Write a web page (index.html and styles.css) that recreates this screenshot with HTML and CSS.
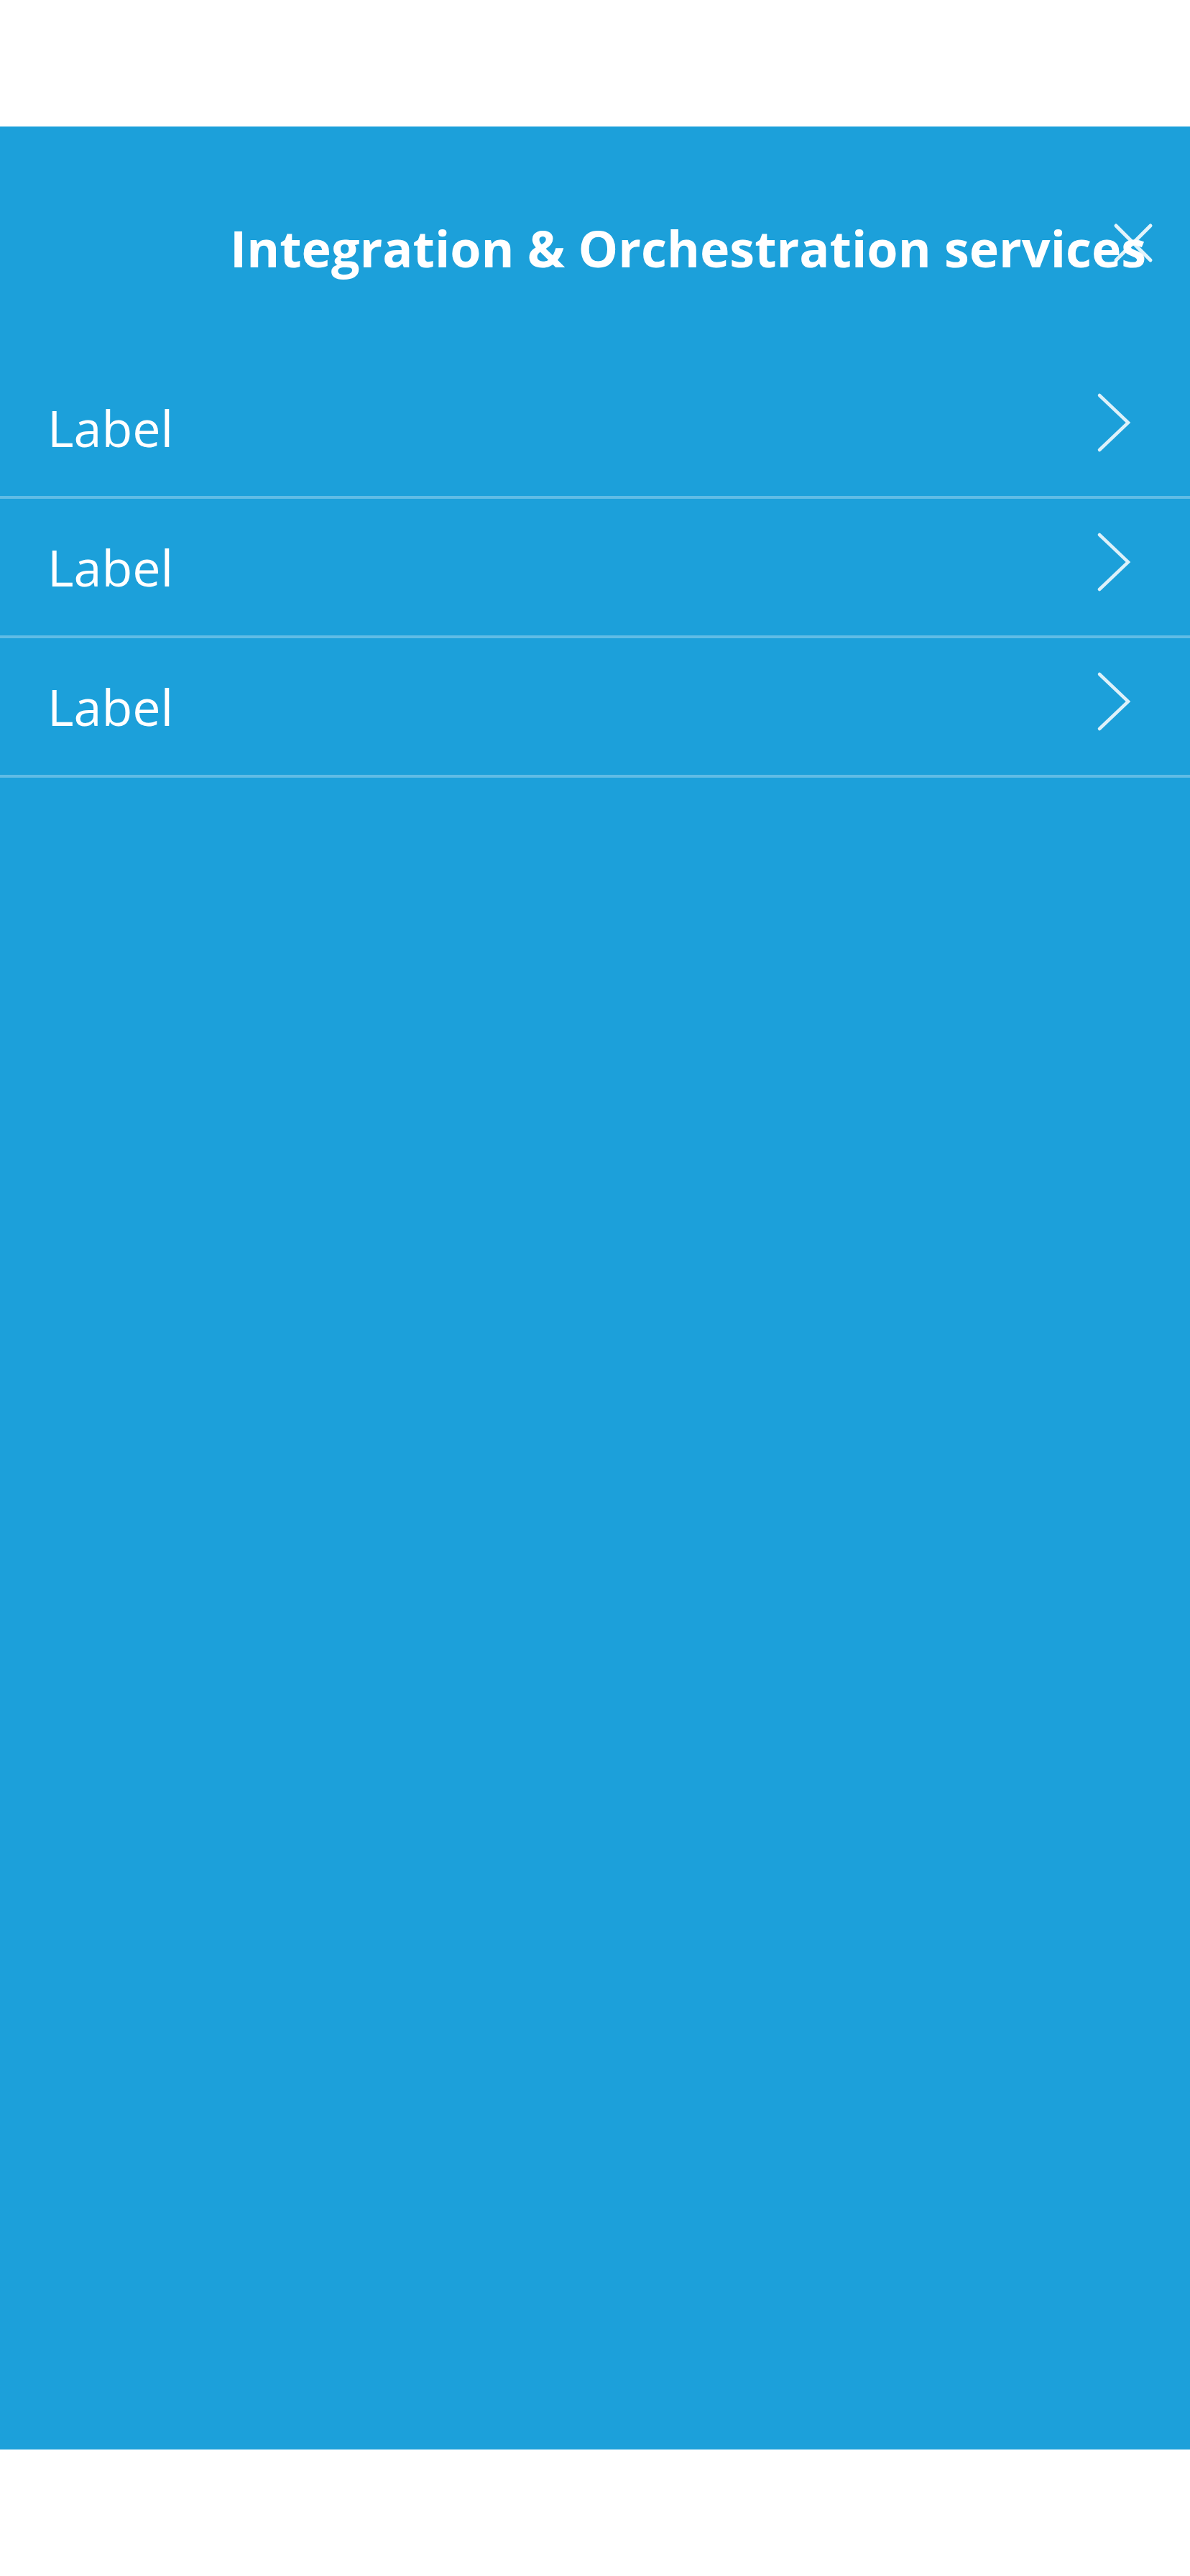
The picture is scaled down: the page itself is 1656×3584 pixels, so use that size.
FILE: index.html
```html
<!DOCTYPE html>
<html lang="en">
<head>
<meta charset="utf-8">
<title>Integration &amp; Orchestration services</title>
<link rel="stylesheet" href="styles.css">
</head>
<body>
<div class="page">
  <section class="panel">
    <header class="panel-header">
      <h1 class="panel-title">Integration &amp; Orchestration services</h1>
      <button class="close-btn" aria-label="Close">
        <svg width="56" height="56" viewBox="0 0 56 56"><path d="M4 4 L52 52 M52 4 L4 52" /></svg>
      </button>
    </header>
    <ul class="menu">
      <li class="menu-item"><span class="menu-label">Label</span><svg class="chevron" width="48" height="84" viewBox="0 0 48 84"><path d="M4 4 L44 42 L4 80" /></svg></li>
      <li class="menu-item"><span class="menu-label">Label</span><svg class="chevron" width="48" height="84" viewBox="0 0 48 84"><path d="M4 4 L44 42 L4 80" /></svg></li>
      <li class="menu-item"><span class="menu-label">Label</span><svg class="chevron" width="48" height="84" viewBox="0 0 48 84"><path d="M4 4 L44 42 L4 80" /></svg></li>
    </ul>
  </section>
</div>
</body>
</html>
```
FILE: styles.css
```css
html, body {
  margin: 0;
  padding: 0;
  background: #ffffff;
}
body {
  font-family: "Open Sans", "Noto Sans", sans-serif;
  color: #ffffff;
}
.page {
  padding-top: 176px;
  height: 3584px;
  box-sizing: border-box;
}
.panel {
  position: relative;
  background: #1ca0da;
  height: 3232px;
}
.panel-header {
  height: 324px;
  box-sizing: border-box;
  padding: 121px 0 0 0;
}
.panel-title {
  margin: 0;
  padding-left: 320px;
  font-size: 70px;
  font-weight: 700;
  line-height: normal;
  white-space: nowrap;
}
.close-btn {
  position: absolute;
  top: 134px;
  right: 51px;
  width: 56px;
  height: 56px;
  padding: 0;
  border: 0;
  background: transparent;
  display: block;
}
.close-btn svg {
  display: block;
}
.close-btn path {
  stroke: rgba(255, 255, 255, 0.88);
  stroke-width: 5;
  stroke-linecap: round;
  fill: none;
}
.menu {
  list-style: none;
  margin: 0;
  padding: 0;
}
.menu-item {
  display: flex;
  align-items: center;
  justify-content: space-between;
  height: 190px;
  padding: 0 82px 0 66px;
  border-bottom: 4px solid rgba(255, 255, 255, 0.3);
}
.menu-label {
  font-size: 70px;
  font-weight: 400;
  line-height: normal;
}
.chevron {
  display: block;
  margin-bottom: 14px;
}
.chevron path {
  stroke: rgba(255, 255, 255, 0.85);
  stroke-width: 4.5;
  stroke-linecap: round;
  stroke-linejoin: miter;
  fill: none;
}
```
